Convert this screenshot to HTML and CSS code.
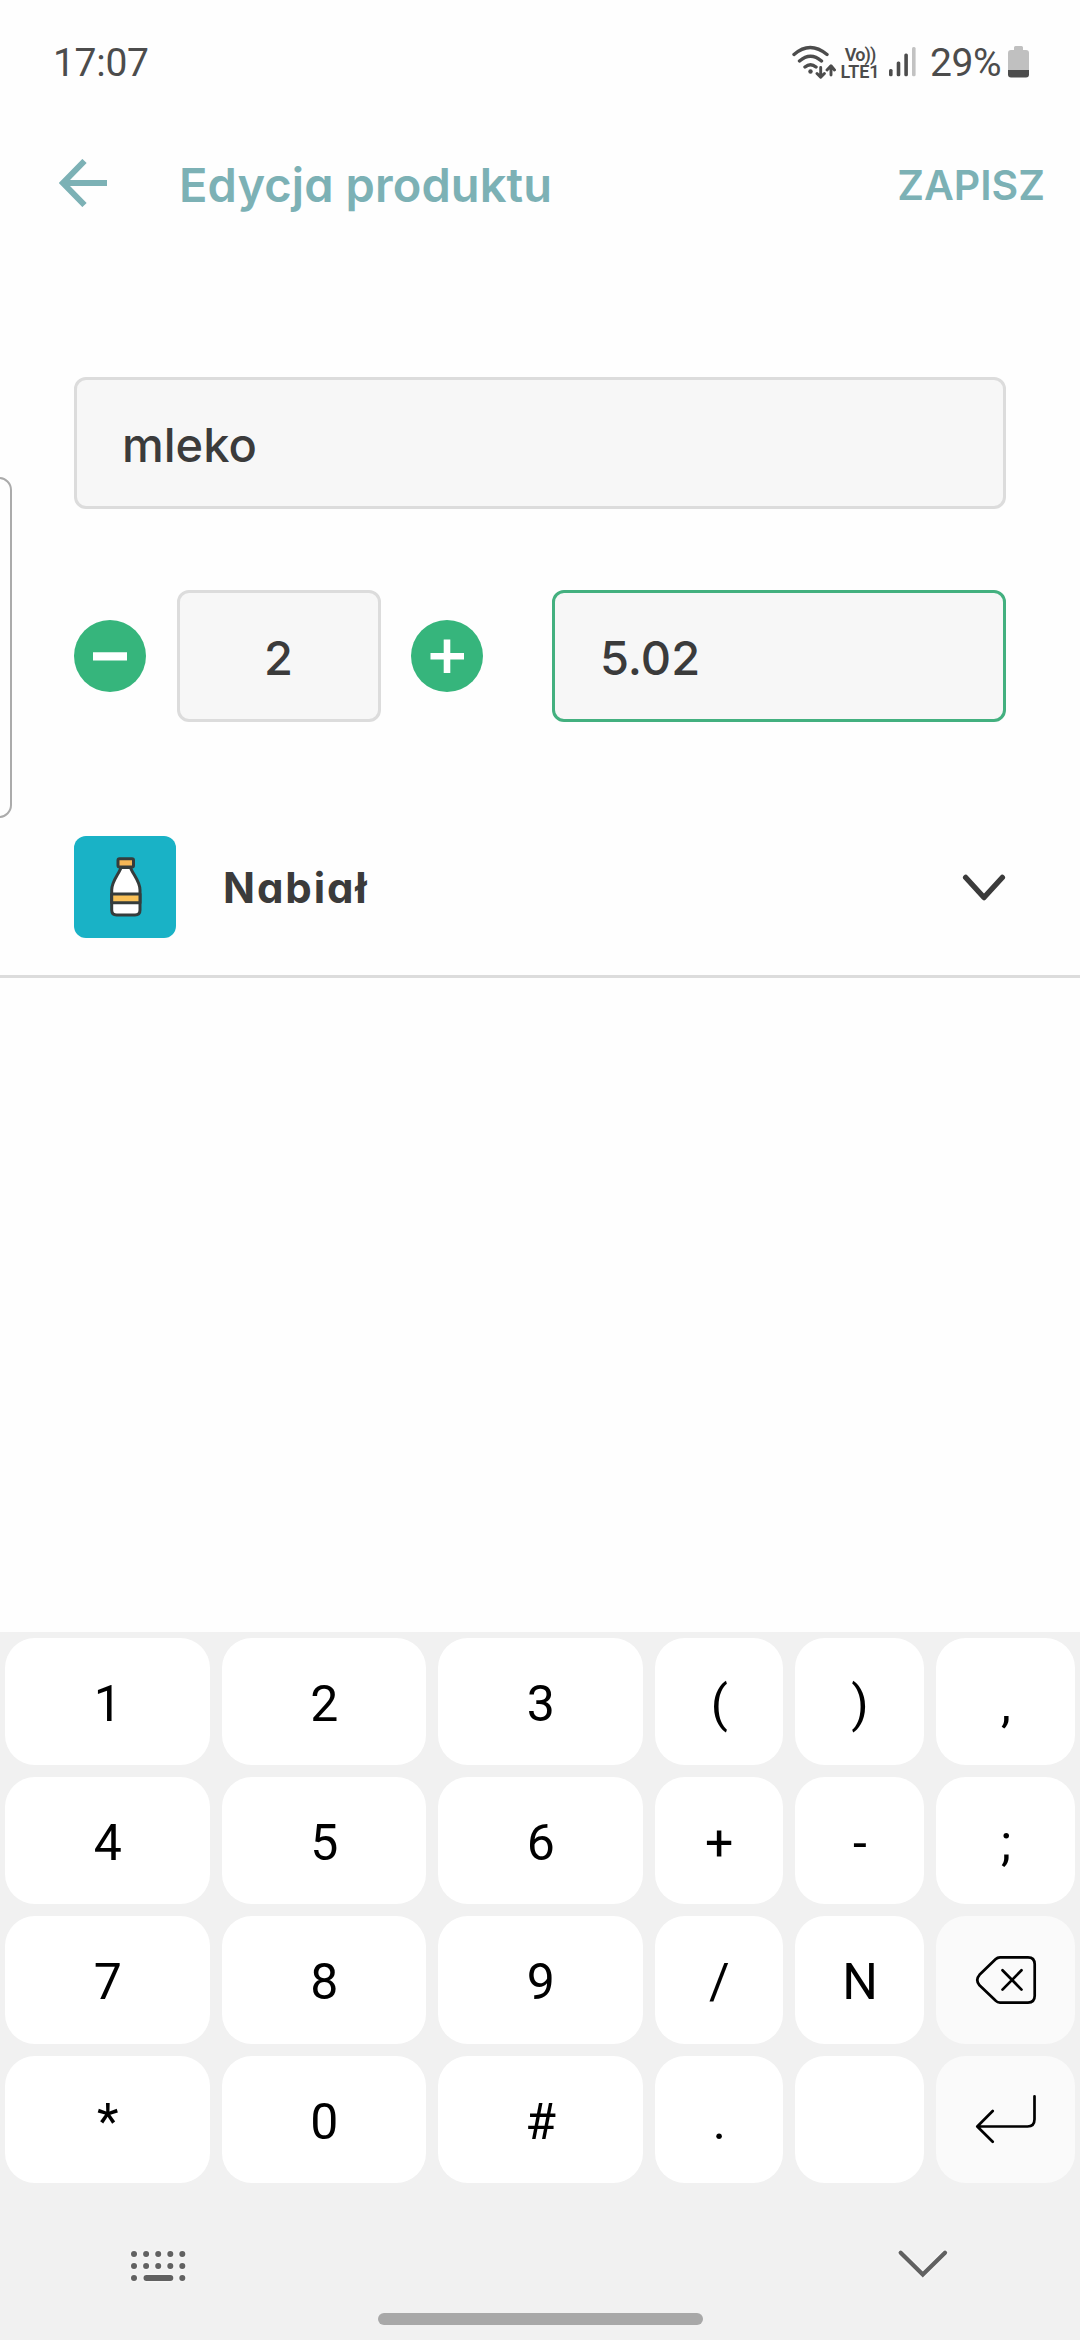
FILE: index.html
```html
<!DOCTYPE html>
<html lang="pl">
<head>
<meta charset="utf-8">
<title>Edycja produktu</title>
<link rel="stylesheet" href="styles.css">
</head>
<body>
<div class="screen">
  <header class="status">
    <span class="clock">17:07</span>
    <div class="indicators">
      <svg class="wifi" width="46" height="36" viewBox="788 44 46 36" fill="none" stroke="#4c4c4c" stroke-width="3.4" stroke-linecap="round">
        <path d="M792 54.500Q808 40.500 825 54.500M797.500 61Q808.500 51.500 819.500 61M803 67Q808.500 62.500 814 67"/>
        <circle cx="808.500" cy="71.500" r="2.200" fill="#4c4c4c" stroke="none"/>
        <path stroke-width="2.900" stroke-linejoin="round" d="M818.700 67.500V77M815 73.500L818.700 77.300L822.400 73.500M829 75V66M825 70L829 65.700L832.500 70"/>
      </svg>
      <div class="volte"><span>Vo))</span><span class="lte">LTE1</span></div>
      <svg class="signal" width="28" height="32" viewBox="886 47 28 32" fill="#4c4c4c">
        <rect x="887" y="70" width="3.600" height="7.300" rx="1.500"/><rect x="894.700" y="62.500" width="3.600" height="14.800" rx="1.500"/><rect x="902.300" y="54.500" width="3.600" height="22.800" rx="1.500"/><rect x="910" y="48" width="3.600" height="29.300" rx="1.500" fill="#c2c2c2"/>
      </svg>
      <span class="percent">29%</span>
      <svg class="battery" width="22" height="32" viewBox="0 0 22 32"><path fill="#c0c0c0" d="M6 1.500Q6 0 7.500 0H13.500Q15 0 15 1.500V4H18Q21 4 21 7V24H0V7Q0 4 3 4H6Z"/><path fill="#4c4c4c" d="M0 24H21V28.500Q21 31.500 18 31.500H3Q0 31.500 0 28.500Z"/></svg>
    </div>
  </header>
  <nav class="appbar">
    <svg class="back" width="48" height="48" viewBox="0 0 48 48" fill="none" stroke="#7cb1b5" stroke-width="6"><path d="M48 24H5M25.500 2L4 24L25.500 46"/></svg>
    <h1 class="title">Edycja produktu</h1>
    <span class="save">ZAPISZ</span>
  </nav>
  <main class="form">
    <div class="field name"><span>mleko</span></div>
    <div class="amounts">
      <svg class="round" viewBox="0 0 72 72"><circle cx="36" cy="36" r="36" fill="#36b57c"/><path fill="#fff" d="M19 32.300H53V40.500H19Z"/></svg>
      <div class="field qty"><span>2</span></div>
      <svg class="round" viewBox="0 0 72 72"><circle cx="36" cy="36" r="36" fill="#36b57c"/><path d="M36 19.500V53M19.500 36.200H53" stroke="#fff" stroke-width="6.600"/></svg>
      <div class="field price"><span>5.02</span></div>
    </div>
  </main>
  <section class="category">
    <div class="tile">
      <svg width="32" height="60" viewBox="0 0 32 60" stroke="#353c3c" stroke-width="3" stroke-linejoin="round">
        <path fill="#fff" d="M11 10.500C9 17 1.700 24 1.700 33V53Q1.700 58 6.700 58H25Q30 58 30 53V33C30 24 22.500 17 20.500 10.500Z"/>
        <path fill="#f9c057" d="M1.700 37H30V45.800H1.700Z"/>
        <rect x="8" y="1.800" width="15.500" height="8.200" rx="1.500" fill="#f6b756"/>
      </svg>
    </div>
    <span class="label">Nabiał</span>
    <svg class="chevron" width="44" height="28" viewBox="962 875 44 28" fill="none" stroke="#3b3b3b" stroke-width="5.500" stroke-linecap="round" stroke-linejoin="round"><path d="M965.700 878.500L984 898.500L1002.300 878.500"/></svg>
  </section>
  <div class="space"></div>
  <section class="keyboard">
    <div class="keys">
      <div class="key">1</div><div class="key">2</div><div class="key">3</div><div class="key">(</div><div class="key">)</div><div class="key">,</div>
      <div class="key">4</div><div class="key">5</div><div class="key">6</div><div class="key">+</div><div class="key">-</div><div class="key">;</div>
      <div class="key">7</div><div class="key">8</div><div class="key">9</div><div class="key">/</div><div class="key">N</div>
      <div class="key action"><svg width="62" height="50" viewBox="974 1954.700 62 50" fill="none" stroke="#000" stroke-width="2.700" stroke-linecap="round" stroke-linejoin="round"><path d="M999 1957H1027Q1033.700 1957 1033.700 1964V1995.500Q1033.700 2002.300 1027 2002.300H999Q996.500 2002.300 994.500 2000.300L978.500 1985Q974 1979.700 978.500 1974.500L994.500 1959Q996.500 1957 999 1957ZM1001.500 1970L1020.500 1989.300M1020.500 1970L1001.500 1989.300"/></svg></div>
      <div class="key">*</div><div class="key">0</div><div class="key">#</div><div class="key">.</div><div class="key"></div>
      <div class="key action"><svg width="62" height="50" viewBox="974 2093.700 62 50" fill="none" stroke="#000" stroke-width="2.700" stroke-linecap="round" stroke-linejoin="round"><path d="M1033.500 2096V2119Q1033.500 2126.200 1026.500 2126.200H976.500M991.700 2110.700L976.300 2126.200L991.700 2141.500"/></svg></div>
    </div>
    <div class="tools">
      <svg width="60" height="36" viewBox="128 2248 60 36" class="switch" fill="none" stroke="#616161" stroke-width="6" stroke-linecap="round"><path d="M134 2254h.01M146.100 2254h.01M158.200 2254h.01M170.300 2254h.01M182.300 2254h.01M134 2266h.01M146.100 2266h.01M158.200 2266h.01M170.300 2266h.01M182.300 2266h.01M134 2278h.01M146.500 2278H170.300M182.300 2278h.01"/></svg>
      <svg width="52" height="32" viewBox="897 2249 52 32" class="hide" fill="none" stroke="#616161" stroke-width="4.300" stroke-linecap="round"><path d="M900.700 2253.800L922.800 2275.500L945 2253.800"/></svg>
    </div>
    <div class="pill"></div>
  </section>
  <div class="edge"></div>
</div>
</body>
</html>
```
FILE: styles.css
```css
* { box-sizing: border-box; }
body { margin: 0; background: #fefefe; }
svg { display: block; flex: none; }
.screen {
  position: relative;
  width: 1080px;
  height: 2340px;
  overflow: hidden;
  display: flex;
  flex-direction: column;
  background: #fefefe;
  font-family: Inter, Lato, sans-serif;
  font-feature-settings: "cv11" 1;
  color: #3b3b3b;
}
.status {
  height: 124px;
  padding: 0 50px 0 53px;
  display: flex;
  justify-content: space-between;
  align-items: center;
  font-family: Roboto, sans-serif;
  font-size: 39px;
  color: #4c4c4c;
}
.clock { letter-spacing: -0.3px; margin-top: 2px; }
.indicators { display: flex; align-items: center; }
.volte {
  width: 40px;
  margin: 2px 8px 0 4px;
  display: flex;
  flex-direction: column;
  align-items: center;
  font-size: 18px;
  line-height: 17px;
  font-weight: 600;
  white-space: nowrap;
}
.volte span:first-child { letter-spacing: -0.8px; }
.percent { margin: 2px 7px 0 14px; letter-spacing: -0.5px; }
.appbar {
  height: 120px;
  padding: 0 35px 3px 59px;
  display: flex;
  align-items: center;
  color: #7cb1b5;
}
.title {
  margin: 4px 0 0 72px;
  font-size: 47px;
  line-height: 60px;
  font-weight: 600;
  letter-spacing: 0.1px;
}
.save {
  margin: 4px 0 0 auto;
  font-size: 41px;
  font-weight: 600;
}
.form {
  padding: 133px 74px 0;
  display: flex;
  flex-direction: column;
  gap: 81px;
}
.field {
  height: 132px;
  border: 3px solid #dcdcdc;
  border-radius: 12px;
  background: #f7f7f7;
  display: flex;
  align-items: center;
  padding: 2px 46px 0 45px;
  font-size: 47px;
  font-weight: 450;
}
.amounts { display: flex; align-items: center; }
.round { width: 72px; height: 72px; }
.qty { width: 204px; margin: 0 30px 0 31px; justify-content: center; }
.price { flex: 1; margin-left: 69px; border-color: #43b07f; }
.category {
  margin-top: 90px;
  height: 166px;
  padding: 24px 74px 0;
  display: flex;
  align-items: flex-start;
  border-bottom: 3px solid #dcdcdc;
}
.tile {
  width: 102px;
  height: 102px;
  border-radius: 12px;
  background: #19b2c6;
  display: grid;
  place-items: center;
  padding-left: 2px;
}
.label {
  margin-left: 47px;
  line-height: 103px;
  font-size: 42px;
  font-weight: 700;
  letter-spacing: 1.9px;
}
.chevron { margin: 38px 0 0 auto; }
.space { flex: 1; }
.keyboard {
  height: 708px;
  padding: 6px 5px 0;
  background: #f1f1f1;
}
.keys {
  display: grid;
  grid-template-columns: 204.500px 204.500px 204.500px 128.500px 129px 139px;
  grid-auto-rows: 127.200px;
  gap: 12px;
}
.key {
  border-radius: 30px;
  background: #fff;
  display: flex;
  align-items: center;
  justify-content: center;
  padding: 5px 0 0 1px;
  font-family: Roboto, sans-serif;
  font-size: 50px;
  color: #000;
}
.action { background: #fafafa; padding: 0; }
.tools {
  height: 130px;
  padding: 65px 126px 0 123px;
  display: flex;
  justify-content: space-between;
}
.switch, .hide { filter: drop-shadow(0 0 1.500px #fff); }
.pill {
  width: 325px;
  height: 12px;
  margin: 0 auto;
  border-radius: 6px;
  background: #a8a8a8;
}
.edge {
  position: absolute;
  left: -20px;
  top: 477px;
  width: 32px;
  height: 341px;
  border: 2px solid #ababab;
  border-radius: 13px;
}
```
